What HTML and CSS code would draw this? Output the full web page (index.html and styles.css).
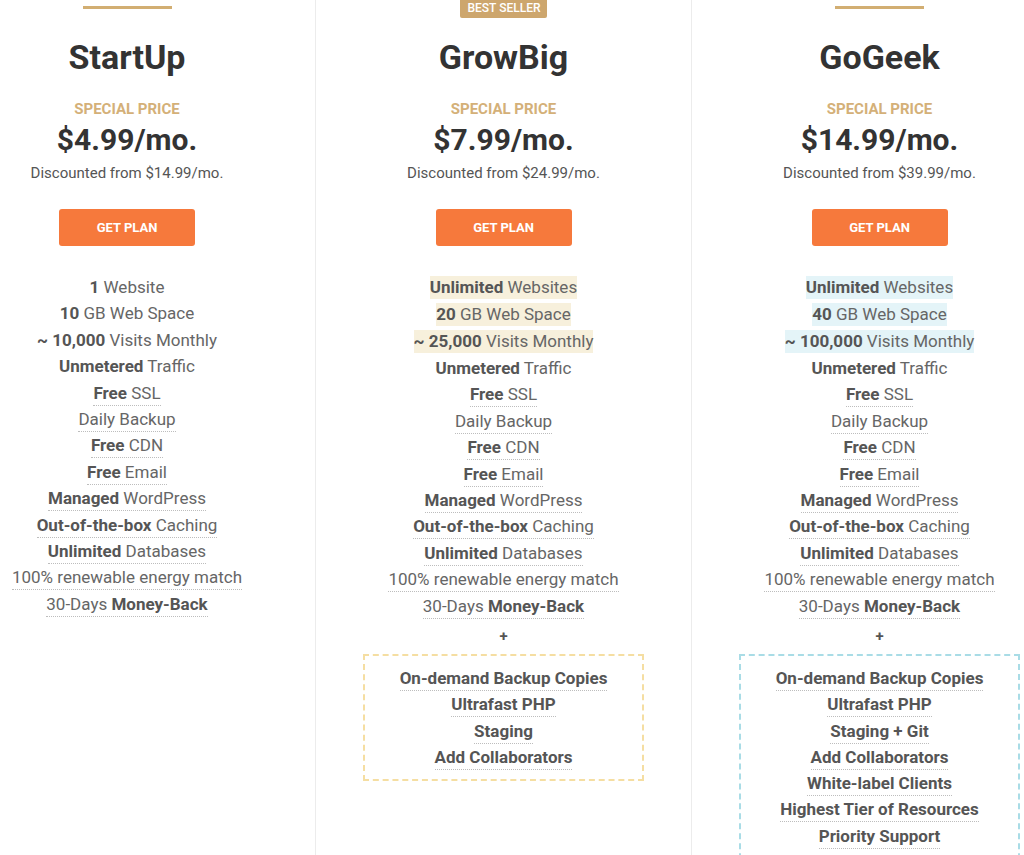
FILE: index.html
```html
<!DOCTYPE html>
<html lang="en">
<head>
<meta charset="utf-8">
<title>Plans</title>
<link rel="stylesheet" href="styles.css">
</head>
<body>
<div class="plans">
  <section class="plan">
    <div class="top"><span class="bar"></span></div>
    <h2 class="name">StartUp</h2>
    <div class="special">SPECIAL PRICE</div>
    <div class="price">$4.99/mo.</div>
    <div class="disc">Discounted from $14.99/mo.</div>
    <a class="btn">GET PLAN</a>
    <ul class="feats">
      <li><span><b>1</b> Website</span></li>
      <li><span><b>10</b> GB Web Space</span></li>
      <li><span><b>~ 10,000</b> Visits Monthly</span></li>
      <li><span><b>Unmetered</b> Traffic</span></li>
      <li><span class="dot"><b>Free</b> SSL</span></li>
      <li><span class="dot">Daily Backup</span></li>
      <li><span class="dot"><b>Free</b> CDN</span></li>
      <li><span class="dot"><b>Free</b> Email</span></li>
      <li><span class="dot"><b>Managed</b> WordPress</span></li>
      <li><span class="dot"><b>Out-of-the-box</b> Caching</span></li>
      <li><span class="dot"><b>Unlimited</b> Databases</span></li>
      <li><span class="dot">100% renewable energy match</span></li>
      <li><span class="dot">30-Days <b>Money-Back</b></span></li>
    </ul>
  </section>
  <section class="plan">
    <div class="top"><span class="badge">BEST SELLER</span></div>
    <h2 class="name">GrowBig</h2>
    <div class="special">SPECIAL PRICE</div>
    <div class="price">$7.99/mo.</div>
    <div class="disc">Discounted from $24.99/mo.</div>
    <a class="btn">GET PLAN</a>
    <ul class="feats gold">
      <li><span class="hl"><b>Unlimited</b> Websites</span></li>
      <li><span class="hl"><b>20</b> GB Web Space</span></li>
      <li><span class="hl"><b>~ 25,000</b> Visits Monthly</span></li>
      <li><span><b>Unmetered</b> Traffic</span></li>
      <li><span class="dot"><b>Free</b> SSL</span></li>
      <li><span class="dot">Daily Backup</span></li>
      <li><span class="dot"><b>Free</b> CDN</span></li>
      <li><span class="dot"><b>Free</b> Email</span></li>
      <li><span class="dot"><b>Managed</b> WordPress</span></li>
      <li><span class="dot"><b>Out-of-the-box</b> Caching</span></li>
      <li><span class="dot"><b>Unlimited</b> Databases</span></li>
      <li><span class="dot">100% renewable energy match</span></li>
      <li><span class="dot">30-Days <b>Money-Back</b></span></li>
    </ul>
    <div class="plus">+</div>
    <ul class="extras gold">
      <li><span class="dot">On-demand Backup Copies</span></li>
      <li><span class="dot">Ultrafast PHP</span></li>
      <li><span class="dot">Staging</span></li>
      <li><span class="dot">Add Collaborators</span></li>
    </ul>
  </section>
  <section class="plan">
    <div class="top"><span class="bar"></span></div>
    <h2 class="name">GoGeek</h2>
    <div class="special">SPECIAL PRICE</div>
    <div class="price">$14.99/mo.</div>
    <div class="disc">Discounted from $39.99/mo.</div>
    <a class="btn">GET PLAN</a>
    <ul class="feats blue">
      <li><span class="hl"><b>Unlimited</b> Websites</span></li>
      <li><span class="hl"><b>40</b> GB Web Space</span></li>
      <li><span class="hl"><b>~ 100,000</b> Visits Monthly</span></li>
      <li><span><b>Unmetered</b> Traffic</span></li>
      <li><span class="dot"><b>Free</b> SSL</span></li>
      <li><span class="dot">Daily Backup</span></li>
      <li><span class="dot"><b>Free</b> CDN</span></li>
      <li><span class="dot"><b>Free</b> Email</span></li>
      <li><span class="dot"><b>Managed</b> WordPress</span></li>
      <li><span class="dot"><b>Out-of-the-box</b> Caching</span></li>
      <li><span class="dot"><b>Unlimited</b> Databases</span></li>
      <li><span class="dot">100% renewable energy match</span></li>
      <li><span class="dot">30-Days <b>Money-Back</b></span></li>
    </ul>
    <div class="plus">+</div>
    <ul class="extras blue">
      <li><span class="dot">On-demand Backup Copies</span></li>
      <li><span class="dot">Ultrafast PHP</span></li>
      <li><span class="dot">Staging + Git</span></li>
      <li><span class="dot">Add Collaborators</span></li>
      <li><span class="dot">White-label Clients</span></li>
      <li><span class="dot">Highest Tier of Resources</span></li>
      <li><span class="dot">Priority Support</span></li>
    </ul>
  </section>
</div>
</body>
</html>
```

FILE: styles.css
```css
html, body {
  margin: 0;
  padding: 0;
  background: #fff;
  overflow: hidden;
  height: 855px;
}
body {
  font-family: Roboto, "Liberation Sans", Arial, sans-serif;
  color: #666;
}
.plans {
  display: grid;
  grid-template-columns: 376px 376px 376px;
  margin-left: -61px;
  width: 1128px;
}
.plan {
  display: flex;
  flex-direction: column;
  align-items: center;
  min-height: 855px;
  box-sizing: border-box;
}
.plan + .plan {
  border-left: 1px solid #ececec;
}
.top {
  height: 20px;
  width: 100%;
  display: flex;
  justify-content: center;
  align-items: flex-start;
}
.bar {
  display: block;
  width: 89px;
  height: 3px;
  margin-top: 6px;
  background: #d2ae72;
}
.badge {
  display: block;
  height: 18px;
  line-height: 16px;
  padding: 0 7px 0 8px;
  background: #cda66d;
  color: #fff;
  font-size: 12px;
  font-weight: 500;
  border-radius: 0 0 2px 2px;
}
.name {
  margin: 17px 0 0;
  font-size: 34px;
  line-height: 40px;
  font-weight: 700;
  color: #333;
}
.special {
  margin-top: 23px;
  font-size: 15px;
  line-height: 18px;
  font-weight: 700;
  color: #d4b078;
}
.price {
  margin-top: 5px;
  font-size: 30px;
  line-height: 34px;
  font-weight: 700;
  color: #333;
}
.disc {
  margin-top: 7px;
  font-size: 15px;
  line-height: 18px;
  color: #555;
}
.btn {
  display: flex;
  align-items: center;
  justify-content: center;
  margin-top: 27px;
  width: 136px;
  height: 37px;
  border-radius: 3px;
  background: #f6793c;
  color: #fff;
  font-size: 13px;
  font-weight: 700;
}
ul {
  list-style: none;
  margin: 0;
  padding: 0;
  text-align: center;
}
.feats {
  margin-top: 28px;
  font-size: 17px;
  line-height: 26.4px;
}
.feats li {
  height: 26.4px;
}
.feats.gold li:nth-child(-n+3),
.feats.blue li:nth-child(-n+3) {
  height: 27px;
}
b {
  font-weight: 700;
  color: #555;
}
.dot {
  border-bottom: 1px dotted #bdbdbd;
  padding-bottom: 2px;
}
.hl {
  padding: 1px 0 2px;
}
.gold .hl { background: #f7f0dc; }
.blue .hl { background: #e4f4f8; }
.plus {
  margin-top: 8px;
  font-size: 15px;
  line-height: 18px;
  font-weight: 700;
  color: #555;
}
.extras {
  margin-top: 9px;
  width: 281px;
  box-sizing: border-box;
  padding: 9px 0 9px;
  font-size: 17px;
  line-height: 26.3px;
  font-weight: 700;
  color: #555;
}
.extras.gold { border: 2px dashed #f5dea2; }
.extras.blue { border: 2px dashed #a9dce6; border-bottom: none; padding-bottom: 40px; }
```
